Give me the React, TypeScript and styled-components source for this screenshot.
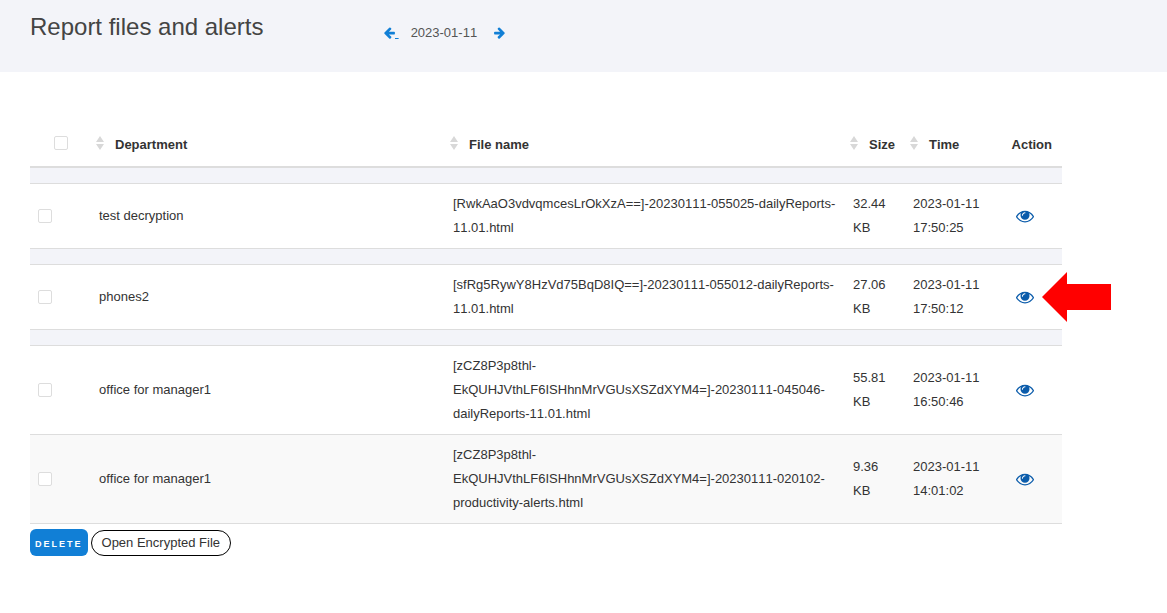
import React, { useState } from "react";
import styled, { createGlobalStyle } from "styled-components";

const GlobalStyle = createGlobalStyle`
  *, *::before, *::after { box-sizing: border-box; }
  body {
    margin: 0;
    background: #fff;
    color: #333;
    font: 13px/24px "Liberation Sans", Arial, sans-serif;
    font-kerning: none;
  }
`;

const PageHeader = styled.header`
  display: grid;
  grid-template-columns: 354px 1fr;
  align-items: start;
  min-height: 72px;
  padding: 12px 30px;
  background: #f3f4f9;
`;

const Title = styled.h1`
  margin: 0;
  color: #444;
  font-size: 24px;
  font-weight: 400;
  line-height: 30px;
`;

const DateNav = styled.nav`
  display: flex;
  align-items: center;
  padding-top: 9px;
  color: #555;
`;

const DateText = styled.time`
  margin: 0 17px 0 12px;
`;

const DateLink = styled.a`
  display: flex;
  align-items: center;
  color: #117fd6;
  text-decoration: underline;

  svg {
    display: block;
    fill: currentColor;
  }
`;

const Main = styled.main`
  padding: 47px 105px 30px 30px;
`;

const Table = styled.table`
  width: 100%;
  table-layout: fixed;
  border-collapse: separate;
  border-spacing: 0;
`;

const Col = styled.col<{ $width?: number }>`
  width: ${(p) => (p.$width ? `${p.$width}px` : "auto")};
`;

const HeadCell = styled.th<{ $align?: string }>`
  height: 49px;
  padding: 4px 10px 0 0;
  border-bottom: 2px solid #ddd;
  text-align: ${(p) => p.$align ?? "left"};
  font-weight: 700;
  white-space: nowrap;
`;

const CheckHeadCell = styled(HeadCell)`
  padding: 0;
`;

const SortLabel = styled.span`
  display: flex;
  align-items: center;
  gap: 11px;
  padding-left: 5px;

  svg {
    flex: none;
    margin-bottom: 4px;
    fill: #d8d8d8;
  }
`;

const SpacerCell = styled.td`
  height: 16px;
  padding: 0;
  border-bottom: 1px solid #ddd;
  background: #f3f4f9;
`;

const BodyRow = styled.tr<{ $shaded?: boolean }>`
  background: ${(p) => (p.$shaded ? "#f9f9f9" : "#fff")};
`;

const Cell = styled.td<{ $align?: string }>`
  position: relative;
  padding: 8px;
  border-bottom: 1px solid #ddd;
  text-align: ${(p) => p.$align ?? "left"};
  vertical-align: middle;
`;

const Checkbox = styled.input.attrs({ type: "checkbox" })`
  display: inline-block;
  appearance: none;
  width: 14px;
  height: 14px;
  margin: 0;
  border: 1px solid #ddd;
  border-radius: 2px;
  background: #fff;
  vertical-align: -3px;

  &:checked {
    background: #117fd6;
  }
`;

const ViewButton = styled.button`
  display: block;
  margin: 0 auto;
  padding: 0;
  border: 0;
  background: none;
  color: #0b5cab;
  cursor: pointer;

  svg {
    display: block;
    fill: currentColor;
  }
`;

const Pointer = styled.svg`
  position: absolute;
  top: calc(50% - 25px);
  left: calc(100% - 20px);
  fill: #f00;
`;

const Actions = styled.div`
  display: flex;
  align-items: flex-end;
  gap: 3px;
  padding-top: 5px;
`;

const DeleteButton = styled.button`
  height: 27px;
  padding: 2px 5px 0;
  border: 0;
  border-radius: 6px;
  background: #117fd6;
  color: #fff;
  font: 700 9px/24px "Liberation Sans", Arial, sans-serif;
  letter-spacing: 2px;
  cursor: pointer;
`;

const OpenButton = styled.button`
  height: 26px;
  padding: 0 10px;
  border: 1px solid #000;
  border-radius: 13px;
  background: #fff;
  color: #333;
  font: 13px/24px "Liberation Sans", Arial, sans-serif;
  cursor: pointer;
`;

const ARROW =
  "M1664 896v128q0 53-32.5 90.5t-84.5 37.5h-704l293 294q38 36 38 90t-38 90l-75 76q-37 37-90 37-52 0-91-37l-651-652q-37-37-37-90 0-52 37-91l651-650q38-38 91-38 52 0 90 38l75 74q38 38 38 91t-38 91l-293 293h704q52 0 84.5 37.5t32.5 90.5z";
const EYE =
  "M1664 960q-152-236-381-353 61 104 61 225 0 185-131.5 316.5t-316.5 131.5-316.5-131.5-131.5-316.5q0-121 61-225-229 117-381 353 133 205 333.5 326.5t434.5 121.5 434.5-121.5 333.5-326.5zm-720-384q0-20-14-34t-34-14q-125 0-214.5 89.5t-89.5 214.5q0 20 14 34t34 14 34-14 14-34q0-86 61-147t147-61q20 0 34-14t14-34zm848 384q0 34-20 69-140 230-376.5 368.5t-499.5 138.5-499.5-139-376.5-368q-20-35-20-69t20-69q140-229 376.5-368t499.5-139 499.5 139 376.5 368q20 35 20 69z";

const ArrowIcon = ({ right }: { right?: boolean }) => (
  <svg width="11" height="13" viewBox="160 128 1515 1790" aria-hidden="true">
    <path d={ARROW} transform={right ? "translate(1835 0) scale(-1 1)" : undefined} />
  </svg>
);

const EyeIcon = () => (
  <svg width="18" height="18" viewBox="0 0 1792 1792" aria-hidden="true">
    <path d={EYE} />
  </svg>
);

const Sortable = ({ children }: { children: React.ReactNode }) => (
  <SortLabel>
    <svg width="8" height="14" viewBox="0 0 8 14" aria-hidden="true">
      <path d="M4 0 8 6H0zM0 8H8L4 14z" />
    </svg>
    {children}
  </SortLabel>
);

interface Report {
  department: string;
  file: string;
  size: string;
  time: string;
  spaced?: boolean;
  shaded?: boolean;
  pointed?: boolean;
}

const REPORTS: Report[] = [
  {
    department: "test decryption",
    file: "[RwkAaO3vdvqmcesLrOkXzA==]-20230111-055025-dailyReports-11.01.html",
    size: "32.44 KB",
    time: "2023-01-11 17:50:25",
    spaced: true,
  },
  {
    department: "phones2",
    file: "[sfRg5RywY8HzVd75BqD8IQ==]-20230111-055012-dailyReports-11.01.html",
    size: "27.06 KB",
    time: "2023-01-11 17:50:12",
    spaced: true,
    pointed: true,
  },
  {
    department: "office for manager1",
    file: "[zCZ8P3p8thl-EkQUHJVthLF6ISHhnMrVGUsXSZdXYM4=]-20230111-045046-dailyReports-11.01.html",
    size: "55.81 KB",
    time: "2023-01-11 16:50:46",
    spaced: true,
  },
  {
    department: "office for manager1",
    file: "[zCZ8P3p8thl-EkQUHJVthLF6ISHhnMrVGUsXSZdXYM4=]-20230111-020102-productivity-alerts.html",
    size: "9.36 KB",
    time: "2023-01-11 14:01:02",
    shaded: true,
  },
];

export default function App() {
  const [selected, setSelected] = useState<boolean[]>(REPORTS.map(() => false));
  const toggle = (index: number) =>
    setSelected((all) => all.map((value, i) => (i === index ? !value : value)));

  return (
    <>
      <GlobalStyle />
      <PageHeader>
        <Title>Report files and alerts</Title>
        <DateNav aria-label="Report date">
          <DateLink href="#previous" aria-label="Previous day">
            <ArrowIcon />
            <span>&nbsp;</span>
          </DateLink>
          <DateText dateTime="2023-01-11">2023-01-11</DateText>
          <DateLink href="#next" aria-label="Next day">
            <ArrowIcon right />
          </DateLink>
        </DateNav>
      </PageHeader>
      <Main>
        <Table>
          <colgroup>
            <Col $width={61} />
            <Col $width={354} />
            <Col />
            <Col $width={60} />
            <Col $width={83} />
            <Col $width={74} />
          </colgroup>
          <thead>
            <tr>
              <CheckHeadCell $align="center">
                <Checkbox
                  aria-label="Select all"
                  checked={selected.every(Boolean)}
                  onChange={(e) => setSelected(REPORTS.map(() => e.target.checked))}
                />
              </CheckHeadCell>
              <HeadCell><Sortable>Department</Sortable></HeadCell>
              <HeadCell><Sortable>File name</Sortable></HeadCell>
              <HeadCell><Sortable>Size</Sortable></HeadCell>
              <HeadCell><Sortable>Time</Sortable></HeadCell>
              <HeadCell $align="right">Action</HeadCell>
            </tr>
          </thead>
          <tbody>
            {REPORTS.map((report, index) => (
              <React.Fragment key={report.time}>
                {report.spaced && (
                  <tr>
                    <SpacerCell colSpan={6} />
                  </tr>
                )}
                <BodyRow $shaded={report.shaded}>
                  <Cell>
                    <Checkbox
                      aria-label={`Select ${report.department}`}
                      checked={selected[index]}
                      onChange={() => toggle(index)}
                    />
                  </Cell>
                  <Cell>{report.department}</Cell>
                  <Cell>{report.file}</Cell>
                  <Cell>{report.size}</Cell>
                  <Cell>{report.time}</Cell>
                  <Cell $align="center">
                    <ViewButton aria-label="View report">
                      <EyeIcon />
                    </ViewButton>
                    {report.pointed && (
                      <Pointer width="69" height="50" viewBox="0 0 69 50" aria-hidden="true">
                        <path d="M0 25 25 0V12H69V38H25V50z" />
                      </Pointer>
                    )}
                  </Cell>
                </BodyRow>
              </React.Fragment>
            ))}
          </tbody>
        </Table>
        <Actions>
          <DeleteButton>DELETE</DeleteButton>
          <OpenButton>Open Encrypted File</OpenButton>
        </Actions>
      </Main>
    </>
  );
}
